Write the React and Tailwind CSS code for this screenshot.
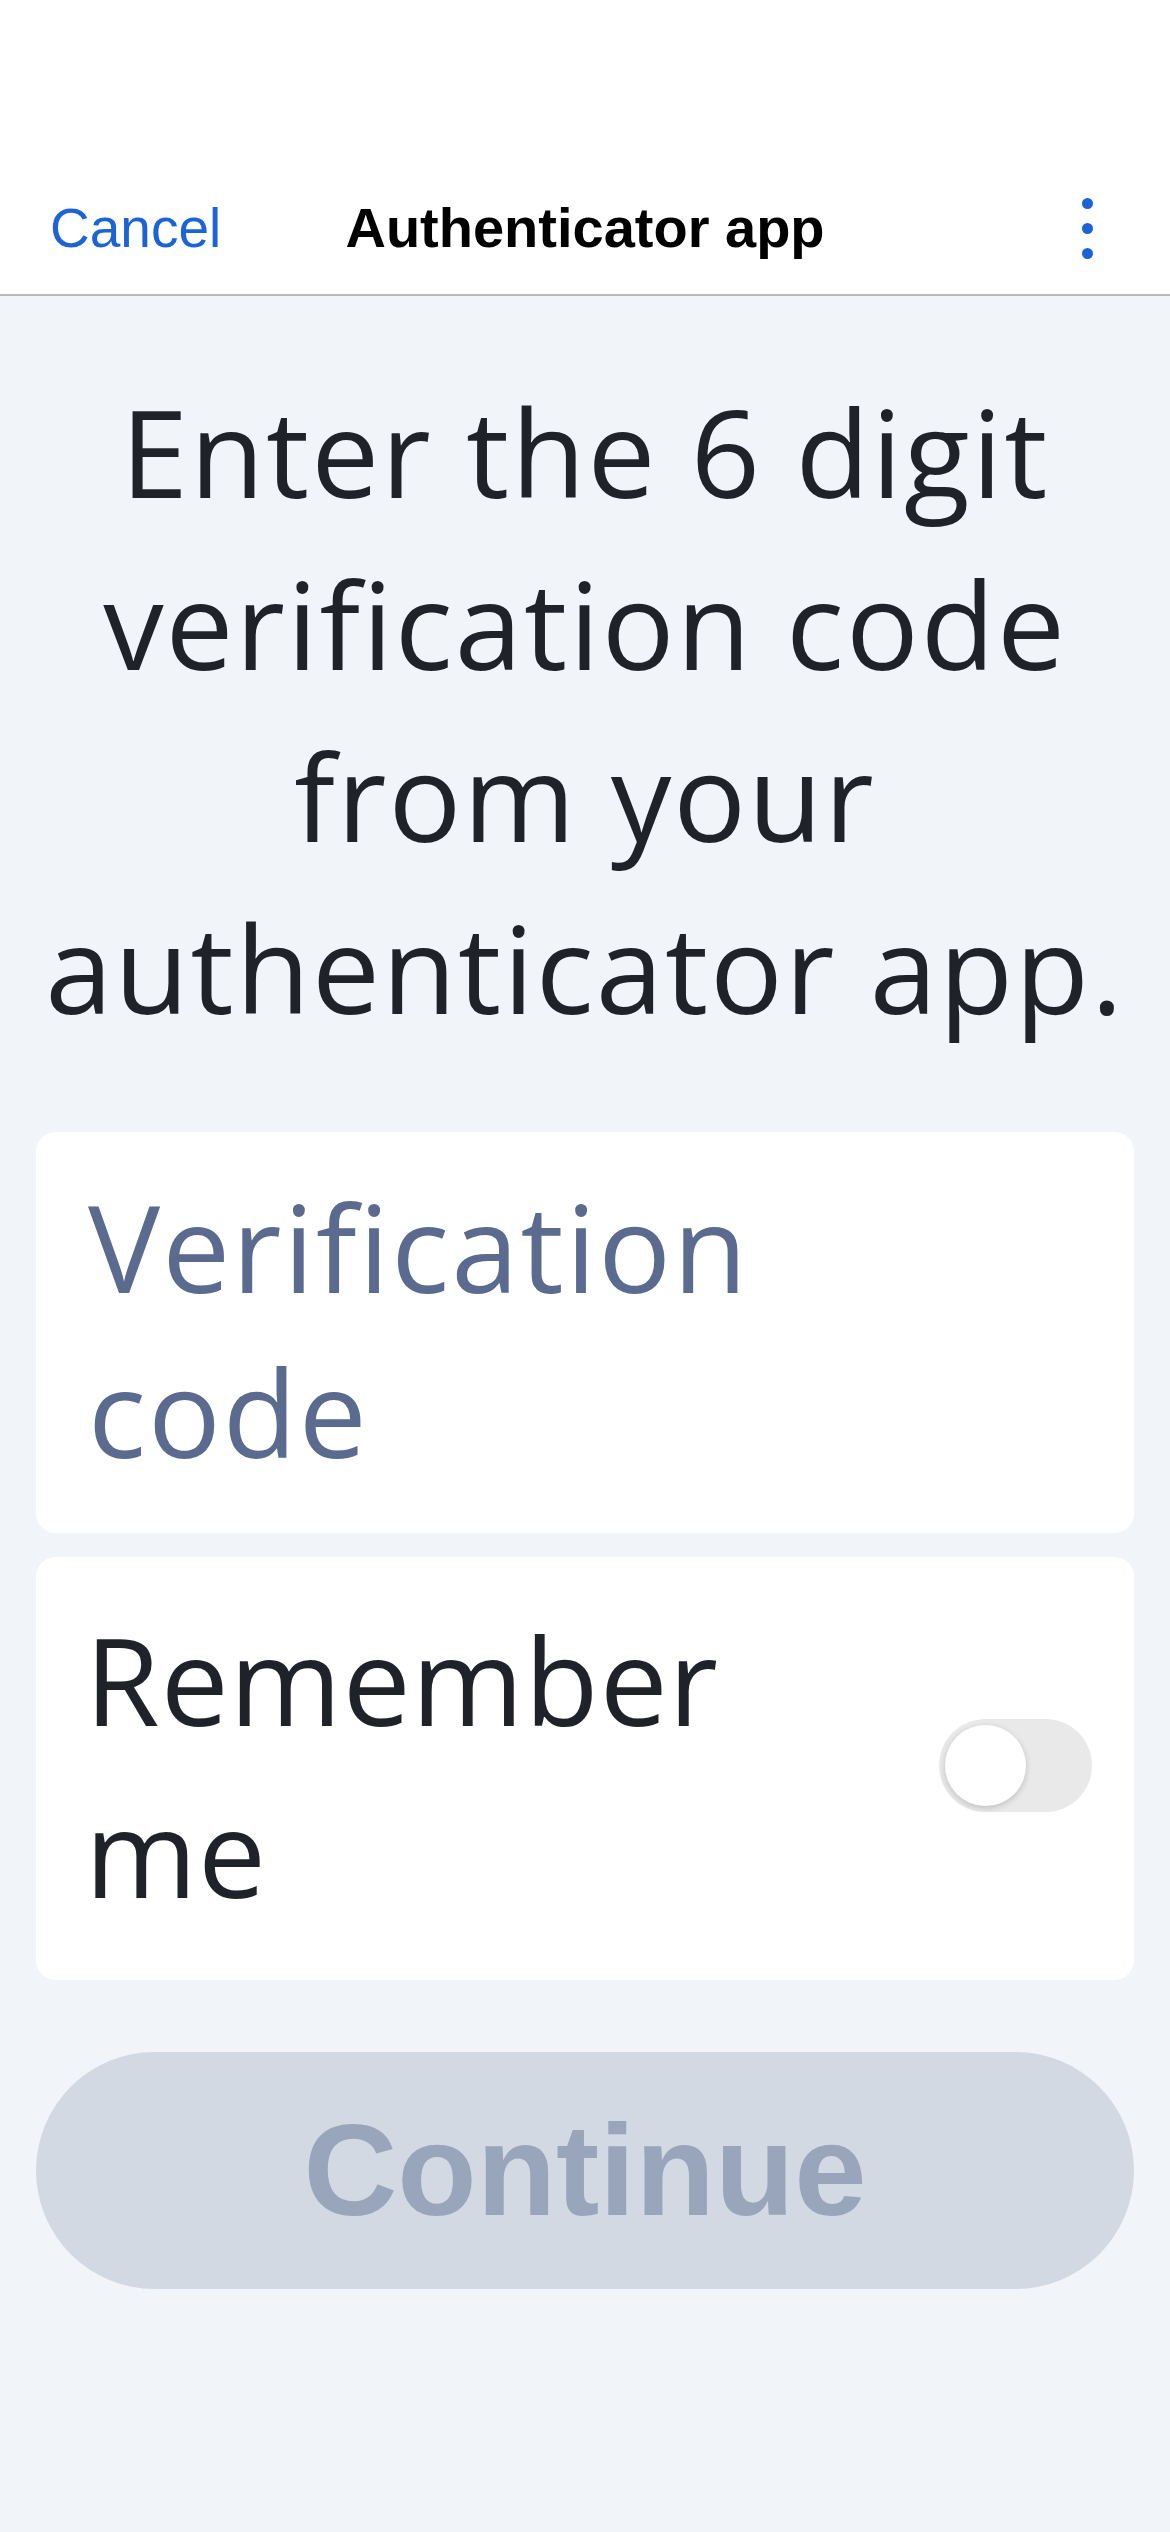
import { useState } from "react";

const BLUE = "text-[#1c63d8]";

function Toggle({ on, onChange }) {
  return (
    <button
      onClick={() => onChange(!on)}
      className={`relative shrink-0 w-[153px] h-[93px] rounded-full ${on ? "bg-[#1c63d8]" : "bg-[#e9e9e9]"}`}
    >
      <span
        className={`absolute top-[6px] ${on ? "left-[66px]" : "left-[6px]"} w-[81px] h-[81px] rounded-full bg-white shadow-[0_2px_6px_rgba(0,0,0,0.18)]`}
      />
    </button>
  );
}

export default function App() {
  const [remember, setRemember] = useState(false);

  return (
    <div className="min-h-[2532px] w-full bg-[#f1f5f9] font-['Open_Sans',sans-serif]">
      {/* header */}
      <div className="bg-white pt-[162px] border-b-2 border-[#b8b8b8]">
        <div className="grid grid-cols-[1fr_auto_1fr] items-center h-[132px] font-['Liberation_Sans',Arial,sans-serif]">
          <button className={`justify-self-start pl-[50px] text-[55px] ${BLUE}`}>Cancel</button>
          <div className="text-[56px] font-bold text-black">Authenticator app</div>
          <button className="justify-self-end pr-[77px] flex flex-col gap-[14px] items-center">
            <span className="w-[11px] h-[11px] rounded-full bg-[#1c63d8]" />
            <span className="w-[11px] h-[11px] rounded-full bg-[#1c63d8]" />
            <span className="w-[11px] h-[11px] rounded-full bg-[#1c63d8]" />
          </button>
        </div>
      </div>

      {/* title */}
      <h1 className="mt-[69px] text-center text-[121px] leading-[172px] tracking-[2px] text-[#1f2229] font-normal">
        Enter the 6 digit
        <br />
        verification code
        <br />
        from your
        <br />
        authenticator app.
      </h1>

      <div className="px-[36px] mt-[79px] flex flex-col gap-[24px]">
        {/* code field */}
        <div className="bg-white rounded-[20px] pl-[52px] pr-[40px] pt-[32px] pb-[39px] text-[121px] leading-[165px] tracking-[2px] text-[#5a6b8f]">
          Verification
          <br />
          code
        </div>

        {/* remember me */}
        <div className="bg-white rounded-[20px] pl-[49px] pr-[42px] pt-[36px] pb-[43px] flex items-center justify-between">
          <div className="text-[121px] leading-[172px] tracking-[1px] text-[#1f2229]">
            Remember
            <br />
            me
          </div>
          <Toggle on={remember} onChange={setRemember} />
        </div>
      </div>

      <div className="px-[36px] mt-[72px]">
        <button className="w-full h-[237px] rounded-full bg-[#d3d9e3] text-[#98a5bb] font-['Liberation_Sans',Arial,sans-serif] font-bold text-[130px]">
          Continue
        </button>
      </div>
    </div>
  );
}
